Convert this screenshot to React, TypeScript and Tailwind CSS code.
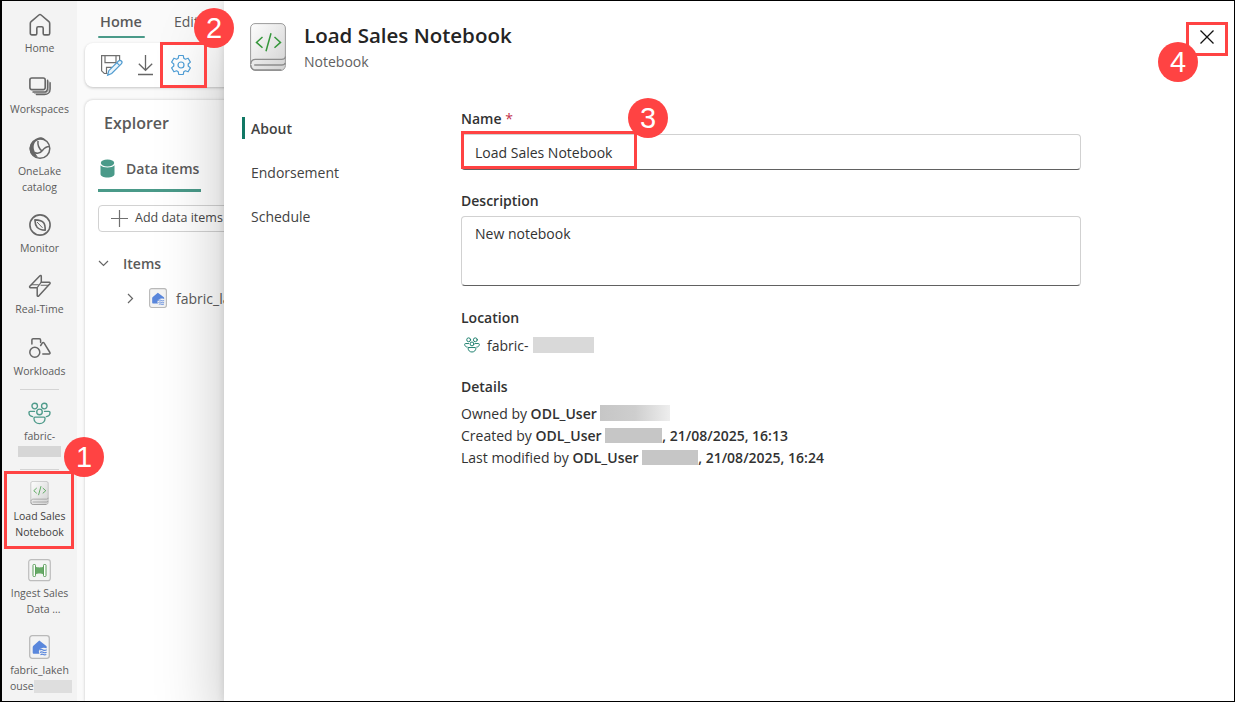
import type { ReactNode } from "react";

type IconProps = { className?: string };

function HomeIcon() {
  return (
    <svg width="22" height="24" viewBox="0 0 22 24" fill="none" stroke="#666" strokeWidth="1.6" strokeLinejoin="round">
      <path d="M1.3 10.4c0-.7.3-1.3.8-1.7L9.9 2c.6-.5 1.6-.5 2.2 0l7.8 6.700c.5.4.8 1 .8 1.700V20.200c0 1-.7 1.700-1.600 1.700h-3.500c-.8 0-1.400-.6-1.400-1.400v-5.300c0-.8-.6-1.400-1.400-1.400H9.200c-.8 0-1.400.6-1.400 1.400v5.300c0 .8-.6 1.400-1.400 1.400H2.900c-.9 0-1.600-.8-1.600-1.700z" />
    </svg>
  );
}

function WorkspacesIcon() {
  return (
    <svg width="22" height="24" viewBox="0 0 22 24" fill="none" stroke="#666" strokeWidth="1.5" strokeLinecap="round">
      <rect x=".9" y="4" width="15.300" height="11.600" rx="2" strokeWidth="1.600" />
      <path d="M4 18.100h10.400c2.500 0 4.200-1.600 4.200-4.200V6.200" />
      <path d="M7.400 20.600h8c3.300 0 5.700-2.200 5.700-5.600V8.800" />
      <path d="M5.500 19.400h9.400c3 0 5-2 5-5V7.500" strokeWidth=".5" />
    </svg>
  );
}

function OneLakeIcon() {
  return (
    <svg width="22" height="24" viewBox="0 0 22 24" fill="none">
      <circle cx="11" cy="12.500" r="9.800" stroke="#666" strokeWidth="1.500" />
      <path d="M6.500 3.800C8 2 10 .9 12.300 1.300c2.200.3 3.800 1.700 4.700 3.300-3-1.300-6.500-1.500-9.500.3-3 2-3.300 6.200-2.200 9.600.7 2.500 2 4.500 3.500 6.500C4.600 21.300.8 17.500.6 13 .5 9.300 2.800 5.800 6.500 3.800z" fill="#666" />
      <path d="M9 5c-.5 4 1 7.800 4.300 10.200M20.400 10.500c-3 0-5 1.300-7 4-1.700 2.300-4.300 3.700-7.800 2" stroke="#666" strokeWidth="1.500" />
    </svg>
  );
}

function MonitorIcon() {
  return (
    <svg width="22" height="24" viewBox="0 0 22 24" fill="none" stroke="#666" strokeWidth="1.600" strokeLinejoin="round">
      <circle cx="11" cy="12" r="10.100" />
      <path d="M5.900 6.900c3.500.1 7.300.8 8.900 3.100 1.200 1.700 1.400 4.500 1.400 7.200-3.500-.1-6.200-.9-8.100-3-1.700-2-2.100-4.500-2.200-7.300z" />
      <path d="M8 9l5.500 5.800" strokeWidth="1" />
    </svg>
  );
}

function RealTimeIcon() {
  return (
    <svg width="24" height="24" viewBox="0 0 24 24" fill="none" stroke="#666" strokeWidth="1.500" strokeLinejoin="round">
      <path d="M11.900 1.800 1.800 12.200c-.5.6-.1 1.500.6 1.500h6.800v7.700c0 .9 1 1.200 1.500.6L21.900 9.700c.5-.6.1-1.500-.7-1.500h-7.900V2.400c0-.9-.8-1.200-1.400-.6z" />
      <path d="M9.200 13.700 13.300 8.200M3 10.800h7.600M12.600 11.200h8" strokeWidth="1.100" />
    </svg>
  );
}

function WorkloadsIcon() {
  return (
    <svg width="22" height="24" viewBox="0 0 22 24" fill="none" stroke="#666" strokeWidth="1.500" strokeLinejoin="round" strokeLinecap="round">
      <path d="M2.900 8V4c0-.7.5-1.200 1.200-1.200h6.300c.7 0 1.200.5 1.200 1.200v2.500" />
      <circle cx="5.800" cy="16.200" r="5" />
      <path d="M11.700 9.500l1.700-2.600c.4-.6 1.200-.6 1.600 0l5.900 9.600c.4.700 0 1.500-.8 1.500h-6.300" />
    </svg>
  );
}

function PeopleIcon({ className }: IconProps) {
  return (
    <svg className={className} viewBox="0 0 24 24" fill="none" strokeWidth="1.400" strokeLinecap="round" strokeLinejoin="round">
      <circle cx="7" cy="4.200" r="2.900" />
      <circle cx="17" cy="4.200" r="2.900" />
      <circle cx="12" cy="10.400" r="2.900" />
      <path d="M6.800 9.800H2.300c-.8 0-1.300.5-1.300 1.200 0 2.300 1.500 4 3.900 4.200M17.200 9.800h4.500c.8 0 1.300.5 1.300 1.200 0 2.300-1.500 4-3.900 4.200M7.300 15.800h9.400c.7 0 1.100.5 1.100 1.100 0 3.100-2.300 5.600-5.800 5.600s-5.800-2.500-5.800-5.600c0-.6.400-1.100 1.100-1.100z" />
    </svg>
  );
}

function NotebookIcon({ className }: IconProps) {
  return (
    <svg className={className} viewBox="0 0 36 48" fill="none">
      <defs>
        <linearGradient id="cover" x1="0" y1="0" x2="1" y2="1">
          <stop offset="0" stopColor="#fdfdfd" />
          <stop offset="1" stopColor="#d2d2d2" />
        </linearGradient>
      </defs>
      <path d="M5 .6h26c2.500 0 4.400 1.900 4.400 4.400v37.500c0 2.500-1.900 4.900-4.400 4.900H5c-2.500 0-4.400-2-4.400-4.400V5C.6 2.500 2.500.6 5 .6z" fill="url(#cover)" stroke="#9b9b9b" />
      <path d="M.8 41c.2-3 2-4.700 4.700-4.700h26c2.300 0 3.800-.9 3.900-2.800M35.200 40c-.3 1.200-1.500 2-3.500 2H4.200M.8 42c.4 3.500 2.500 5 5 5h25.500" stroke="#8d8d8d" strokeWidth="1.300" />
      <path d="M12.500 14 6.500 19.400l6 5.300M24.500 14l6 5.400-6 5.300M21 10.300l-5 18" stroke="#35973b" strokeWidth="1.500" />
    </svg>
  );
}

function PipelineIcon() {
  return (
    <svg width="23" height="23" viewBox="0 0 23 23" fill="none">
      <rect x=".7" y=".7" width="21.600" height="21" rx="2.500" fill="#f4f4f4" stroke="#bdbdbd" strokeWidth="1.200" />
      <path d="M7.500 7.500c2 1.200 6 1.200 8 0v8c-2-1.200-6-1.200-8 0z" fill="#67aa67" />
      <rect x="5" y="5.500" width="2.500" height="12" rx=".8" fill="#fff" stroke="#5c9f5c" />
      <rect x="15.500" y="5.500" width="2.500" height="12" rx=".8" fill="#fff" stroke="#5c9f5c" />
    </svg>
  );
}

function LakehouseIcon({ className }: IconProps) {
  return (
    <svg className={className} viewBox="0 0 21 24" fill="none" preserveAspectRatio="none">
      <rect x=".7" y=".7" width="19.600" height="22.600" rx="2.500" fill="#f3f3f3" stroke="#b9b9b9" strokeWidth="1.300" />
      <path d="M10.300 5.600 17 10.800c.6.5.7.9.7 1.600v.9c-2.600-1-4.600-.6-6.200.5-2 1.300-2 3.300-1 4.900H5c-.8 0-1.300-.5-1.300-1.300v-5c0-.7.2-1.100.7-1.600z" fill="#5a87dc" />
      <path d="M10.500 15.200c1.200-1 2.300-1 3.500-.3s2.400.7 3.700-.1M11 17.500c1.100-.8 2-.8 3.100-.2s2.300.6 3.500-.1M11.500 19.700c1-.7 1.800-.7 2.800-.2s2 .4 3-.1" stroke="#5a87dc" strokeWidth="1.100" />
    </svg>
  );
}

function SaveEditIcon() {
  return (
    <svg width="23" height="23" viewBox="0 0 23 23" fill="none" strokeWidth="1.200">
      <path d="M7.500 19.500H4.300L1.600 16.800V1.600h18v5.500M5 1.600v7h11v-7M6.500 19.500v-6.200H12" stroke="#707070" />
      <path d="M7.600 21.300l1.200-4.600L18.500 7c1-.9 2.100-.8 2.900 0s.8 1.900-.1 2.800l-9.600 9.700zM16.800 8.700l2.900 2.900" stroke="#4f9bd0" fill="#eaf5fc" />
    </svg>
  );
}

function GearIcon() {
  return (
    <svg width="22" height="22" viewBox="0 0 22 22" fill="none" stroke="#4f9fd8" strokeWidth="1.200" strokeLinejoin="round">
      <path d="M8.700 1.500h4.600l.5 2.800 1.600.9 2.700-1 2.300 3.900-2.200 1.900v2l2.200 1.900-2.300 3.900-2.700-1-1.600.9-.5 2.800H8.700l-.5-2.800-1.600-.9-2.700 1-2.300-3.900L3.800 12v-2L1.600 8.100l2.300-3.900 2.700 1 1.600-.9z" />
      <circle cx="11" cy="11" r="3" />
    </svg>
  );
}

function Rail({ icon, lines, className = "", textClass = "text-[#5c5c5c]" }: { icon: ReactNode; lines: string[]; className?: string; textClass?: string }) {
  return (
    <div className={"flex w-full flex-col items-center gap-[3px] " + className}>
      <div className="flex h-6 items-center justify-center">{icon}</div>
      <div className={"flex flex-col items-center text-[10.5px] leading-4 " + textClass}>
        {lines.map((l) => (
          <span key={l} className="whitespace-pre">{l}</span>
        ))}
      </div>
    </div>
  );
}

function Badge({ n, className }: { n: number; className: string }) {
  return (
    <div className={"absolute z-30 flex h-10 w-10 items-center justify-center rounded-full bg-[#ff4343] font-['Liberation_Sans'] text-[29px] leading-none text-white " + className}>
      {n}
    </div>
  );
}

function Mask({ className }: { className: string }) {
  return <span className={"inline-block shrink-0 " + className} />;
}

export default function App() {
  return (
    <div className="relative flex h-[702px] w-[1235px] overflow-hidden border border-l-2 border-black bg-[#fafafa] font-['Open_Sans',sans-serif]">
      <nav className="flex w-[75px] shrink-0 flex-col items-center bg-[#f3f3f3] pt-3">
        <Rail icon={<HomeIcon />} lines={["Home"]} />
        <Rail className="mt-[18px]" icon={<WorkspacesIcon />} lines={["Workspaces"]} />
        <Rail className="mt-[19px]" icon={<OneLakeIcon />} lines={["OneLake", "catalog"]} />
        <Rail className="mt-[18px]" icon={<MonitorIcon />} lines={["Monitor"]} />
        <Rail className="mt-[18px]" icon={<RealTimeIcon />} lines={["Real-Time"]} />
        <Rail className="mt-[19px]" icon={<WorkloadsIcon />} lines={["Workloads"]} />
        <div className="mt-[10px] h-px w-[39px] bg-[#d4d4d4]" />
        <Rail className="mt-[11px]" icon={<PeopleIcon className="h-[23px] w-[23px] stroke-[#4f9b8b]" />} lines={["fabric-"]} />
        <Mask className="mt-[2px] h-[11px] w-[43px] bg-[#d6d6d6]" />
        <div className="mt-3 h-px w-[39px] bg-[#d4d4d4]" />
        <Rail className="mt-[11px]" icon={<NotebookIcon className="h-6 w-[21px]" />} lines={["Load Sales", "Notebook"]} textClass="text-[#404040]" />
        <Rail className="mt-[18px]" icon={<PipelineIcon />} lines={["Ingest Sales", "   Data ..."]} />
        <div className="mt-[18px] flex w-full flex-col gap-[3px]">
          <LakehouseIcon className="mx-auto h-6 w-[21px]" />
          <div className="text-[10.500px] leading-4 text-[#5c5c5c]">
            <div className="text-center">fabric_lakeh</div>
            <div className="flex items-center pl-2">
              ouse
              <Mask className="h-[13px] w-[38px] bg-[#dedede]" />
            </div>
          </div>
        </div>
      </nav>

      <div className="flex min-w-0 flex-1 flex-col pl-2 text-[#5a5a5a]">
        <div className="flex h-[41px] gap-[29px] pl-[14px]">
          <div className="-ml-px flex h-9 w-[47px] flex-col justify-between pt-[11px] text-[14.500px] font-semibold leading-5">
            <span className="pl-[2px]">Home</span>
            <span className="-mb-px h-[2px] rounded-full bg-[#4a9a89]" />
          </div>
          <span className="pt-[11px] text-[14px] leading-5">Edit</span>
        </div>
        <div className="mt-px flex h-[44px] items-center rounded-lg bg-white pl-[15px] shadow-[0_1px_3px_rgba(0,0,0,0.22)]">
          <SaveEditIcon />
          <svg className="ml-[14px]" width="17" height="22" viewBox="0 0 17 22" fill="none" stroke="#666" strokeWidth="1.300">
            <path d="M8.500 1v15M1.800 9.800l6.700 6.500 6.700-6.500M1 20.500h15" />
          </svg>
          <div className="ml-[16px]"><GearIcon /></div>
        </div>
        <div className="mt-[13px] flex flex-1 flex-col rounded-tl-lg bg-white pl-[13px] shadow-[0_0_3px_rgba(0,0,0,0.22)]">
          <h2 className="mt-[11px] pl-[6px] text-[16px] font-semibold leading-6">Explorer</h2>
          <div className="mt-[22px] flex h-[35px] w-[103px] items-start border-b-[3px] border-[#4a9a89]">
            <svg className="ml-[2px] mt-[2px]" width="15" height="19" viewBox="0 0 15 19">
              <path d="M.5 6.200c1.500 1.600 3.800 2.200 7 2.200s5.500-.6 7-2.200v8.800c0 2-3 3.500-7 3.500S.5 17 .5 15z" fill="#4a9a89" />
              <ellipse cx="7.500" cy="4" rx="6.700" ry="3.400" fill="#4a9a89" />
            </svg>
            <span className="ml-[11px] whitespace-nowrap text-[14px] font-semibold leading-6">Data items</span>
          </div>
          <div className="mt-[13px] flex h-[27px] w-[150px] items-center rounded border border-[#d2d2d2] pl-3">
            <svg width="17" height="17" viewBox="0 0 17 17" stroke="#707070" strokeWidth="1.200"><path d="M8.500 0v17M0 8.500h17" /></svg>
            <span className="ml-[7px] whitespace-nowrap text-[12.500px] text-[#484848]">Add data items</span>
          </div>
          <div className="mt-[19px] flex h-6 items-center">
            <svg width="11" height="7" viewBox="0 0 11 7" fill="none" stroke="#666" strokeWidth="1.200"><path d="M1 1l4.500 4.500L10 1" /></svg>
            <span className="ml-[14px] text-[14px] font-semibold">Items</span>
          </div>
          <div className="mt-[11px] flex h-6 items-center pl-[29px]">
            <svg width="7" height="11" viewBox="0 0 7 11" fill="none" stroke="#666" strokeWidth="1.200"><path d="M1 1l4.500 4.500L1 10" /></svg>
            <LakehouseIcon className="ml-[15px] h-5 w-[18px]" />
            <span className="ml-[9px] text-[14px]">fabric_lakehouse</span>
          </div>
        </div>
      </div>

      <section className="absolute bottom-0 right-0 top-0 z-10 flex w-[1010px] flex-col bg-white text-[14px] text-[#323232] shadow-[0_0_8px_rgba(0,0,0,0.12),0_32px_64px_rgba(0,0,0,0.24)]">
        <header className="flex pl-[26px] pt-[22px]">
          <NotebookIcon className="h-12 w-9" />
          <div className="ml-[18px]">
            <h1 className="text-[20.500px] font-semibold leading-6 text-[#242424]">Load Sales Notebook</h1>
            <p className="mt-[5px] text-[14px] leading-5 text-[#616161]">Notebook</p>
          </div>
          <svg className="ml-auto mr-5 mt-[7px]" width="14" height="14" viewBox="0 0 14 14" stroke="#111" strokeWidth="1.300"><path d="M.5.5l13 13M13.500.5l-13 13" /></svg>
        </header>
        <div className="mt-[36px] flex">
          <aside className="flex w-[237px] shrink-0 flex-col gap-[22px] pl-[18px] pt-[9px] text-[#424242]">
            <div className="flex h-[22px] items-center border-l-[3px] border-[#117865] pl-[6px] font-semibold">About</div>
            <div className="flex h-[22px] items-center pl-[9px]">Endorsement</div>
            <div className="flex h-[22px] items-center pl-[9px]">Schedule</div>
          </aside>
          <main className="w-[620px]">
            <div className="h-[22px] font-semibold leading-[22px]">Name <span className="font-normal text-[#c4314b]">*</span></div>
            <div className="mt-[4px] flex h-9 items-center rounded border border-[#d1d1d1] border-b-[#616161] pl-[13px]">Load Sales Notebook</div>
            <div className="mt-[20px] h-[22px] font-semibold leading-[22px]">Description</div>
            <div className="mt-1 h-[70px] rounded border border-[#d1d1d1] border-b-[#616161] pl-[13px] pt-[6px] leading-[22px]">New notebook</div>
            <div className="mt-[21px] h-[22px] font-semibold leading-[22px]">Location</div>
            <div className="mt-[5px] flex h-[22px] items-center">
              <PeopleIcon className="ml-[3px] h-4 w-4 stroke-[#117865]" />
              <span className="ml-[7px] w-[46px]">fabric-</span>
              <Mask className="h-4 w-[61px] bg-[#d9d9d9]" />
            </div>
            <div className="mt-[20px] h-[22px] font-semibold leading-[22px]">Details</div>
            <div className="mt-1 flex h-[22px] items-center whitespace-pre">
              <span>Owned by </span><b className="font-semibold">ODL_User </b>
              <Mask className="h-4 w-[70px] bg-linear-to-r from-[#c6c6c6] via-[#cecece] to-[#eeeeee]" />
            </div>
            <div className="flex h-[22px] items-center whitespace-pre">
              <span>Created by </span><b className="font-semibold">ODL_User </b>
              <Mask className="h-[15px] w-[57px] bg-[#c6c6c6]" />
              <b className="font-semibold">, 21/08/2025, 16:13</b>
            </div>
            <div className="flex h-[22px] items-center whitespace-pre">
              <span>Last modified by </span><b className="font-semibold">ODL_User </b>
              <Mask className="h-[15px] w-[56px] bg-[#c6c6c6]" />
              <b className="font-semibold">, 21/08/2025, 16:24</b>
            </div>
          </main>
        </div>
      </section>

      <div className="absolute left-[2px] top-[470px] z-20 h-[78px] w-[70px] border-3 border-[#ff4343]" />
      <div className="absolute left-[158px] top-[41px] z-20 h-[46px] w-[47px] border-3 border-[#ff4343]" />
      <div className="absolute left-[459px] top-[130px] z-20 h-[38px] w-[176px] border-3 border-[#ff4343]" />
      <div className="absolute left-[1184px] top-[21px] z-20 h-[34px] w-[42px] border-3 border-[#ff4343]" />
      <Badge n={1} className="left-[62px] top-[436px]" />
      <Badge n={2} className="left-[192px] top-[7px]" />
      <Badge n={3} className="left-[626px] top-[97px]" />
      <Badge n={4} className="left-[1156px] top-[41px]" />
    </div>
  );
}
